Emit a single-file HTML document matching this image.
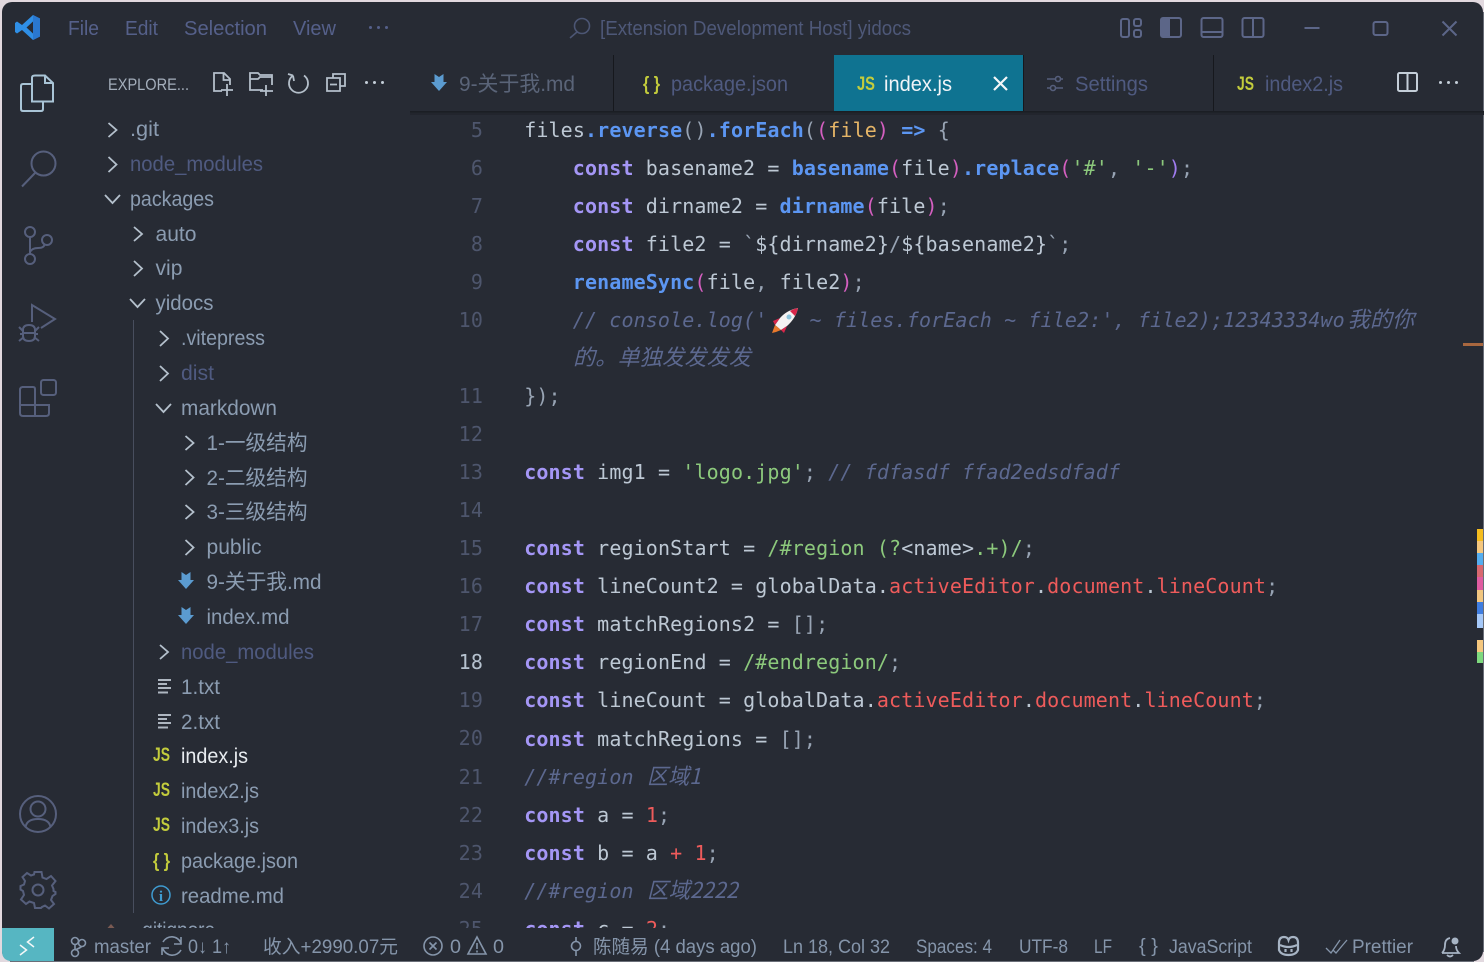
<!DOCTYPE html>
<html lang="zh">
<head>
<meta charset="utf-8">
<title>VS Code</title>
<style>
html,body{margin:0;padding:0;width:1484px;height:962px;overflow:hidden;background:#e2d9df}
svg{display:block;position:absolute;left:0;top:0}
text{white-space:pre}
.u{font-family:"Liberation Sans","Noto Sans CJK SC",sans-serif;font-size:21px;fill:#8b9cb1}
.d{fill:#4f5a80}
.s{font-size:19px;fill:#8595aa}
.m{font-size:20px;fill:#55608a}
.t{fill:#5a6478}
.js{font-family:"Liberation Sans",sans-serif;font-weight:bold;font-size:19px;fill:#c3cc3c}
.c{font-family:"DejaVu Sans Mono","Noto Sans CJK SC",monospace;font-size:20px;letter-spacing:.12px;fill:#bdc8d4}
.n{font-family:"DejaVu Sans Mono",monospace;font-size:20px;letter-spacing:.12px;fill:#4e566d;text-anchor:end}
.k{fill:#a496f5;font-weight:bold}
.f{fill:#5c96f2;font-weight:bold}
.q{fill:#8cc97c}
.r{fill:#ee5b5b}
.p{fill:#d45fc0}
.o{fill:#e5b567}
.g{fill:#98a4b4}
.v{fill:#a07cf0}
.cm{font-style:italic;fill:#5c688f}
.ic{fill:none;stroke:#565f7c;stroke-width:2}
.ia{fill:none;stroke:#b4c0cc;stroke-width:2}
.ch{fill:none;stroke:#b4c0cc;stroke-width:1.8}
.tx{fill:none;stroke:#aeb6c0;stroke-width:2}
</style>
</head>
<body>
<svg width="1484" height="962" viewBox="0 0 1484 962" xmlns="http://www.w3.org/2000/svg">
<defs>
<clipPath id="ed"><rect x="410" y="115" width="1074" height="813"/></clipPath>
<clipPath id="sb"><rect x="100" y="115" width="310" height="813"/></clipPath>
<g id="md"><path d="M-1.500 0L3 3L7.500 0V8H11L3 17L-5 8H-1.500Z" fill="#5b9bd0"/></g>
</defs>

<rect x="2" y="2" width="1481" height="959" rx="10" fill="#272b34"/>
<rect x="1483" y="12" width="1" height="940" fill="#6a6e78"/>
<rect x="10" y="961" width="1464" height="1" fill="#6a6e78"/>

<!-- logo -->
<path d="M33 15L40 18.500V36.500L33 40L22 30L17 33.500L15 32V23L17 21.500L22 25ZM33 21.500L26.500 27.500L33 33.500Z" fill="#2f8fe6" fill-rule="evenodd"/>
<path d="M33 15L40 18.500V36.500L33 40Z" fill="#2a78d0"/>

<!-- menu -->
<text class="u m" x="68" y="35" textLength="31" lengthAdjust="spacingAndGlyphs">File</text>
<text class="u m" x="125" y="35" textLength="33" lengthAdjust="spacingAndGlyphs">Edit</text>
<text class="u m" x="184" y="35" textLength="83" lengthAdjust="spacingAndGlyphs">Selection</text>
<text class="u m" x="293" y="35" textLength="43" lengthAdjust="spacingAndGlyphs">View</text>
<g fill="#55608a"><rect x="369" y="26" width="3" height="3" rx="1.500"/><rect x="377" y="26" width="3" height="3" rx="1.500"/><rect x="385" y="26" width="3" height="3" rx="1.500"/></g>

<!-- title -->
<circle cx="582" cy="26" r="7.500" class="ic" style="stroke:#4c5674;stroke-width:1.600"/>
<path d="M577 32L570 38" class="ic" style="stroke:#4c5674;stroke-width:1.600"/>
<text class="u m" style="fill:#4e5878" x="600" y="35" textLength="311" lengthAdjust="spacingAndGlyphs">[Extension Development Host] yidocs</text>

<!-- window controls -->
<g class="ic" style="stroke:#5c6688">
<rect x="1121" y="19" width="8" height="18" rx="2"/>
<rect x="1134" y="19" width="7" height="7" rx="2"/>
<rect x="1134" y="30" width="7" height="7" rx="2"/>
<rect x="1161" y="18" width="20" height="19" rx="2"/>
<rect x="1201.500" y="18" width="21" height="19" rx="2"/>
<path d="M1202 32H1222"/>
<rect x="1242.500" y="18" width="21" height="19" rx="2"/>
<path d="M1253 18V37"/>
<path d="M1304.500 28H1319.500"/>
<rect x="1373.500" y="22" width="14" height="13" rx="2"/>
<path d="M1442.500 21.500L1456.500 35.500M1456.500 21.500L1442.500 35.500"/>
</g>
<rect x="1161" y="18" width="9" height="19" fill="#5c6688"/>

<!-- activity bar -->
<g class="ia" style="stroke:#a9c4d6">
<path d="M35 75.500H45L53 83V101.500H32V77.500Q32 75.500 35 75.500ZM45 76V83H53"/>
<path d="M31.500 84H23Q21 84 21 86V109Q21 111 23 111H41Q43 111 43 109V102"/>
</g>
<g class="ic">
<circle cx="43.500" cy="163.500" r="12"/>
<path d="M35 173L22 186.500"/>
<circle cx="30" cy="232" r="5"/>
<circle cx="30" cy="259" r="5"/>
<circle cx="47" cy="240" r="5"/>
<path d="M30 237V254M30 252Q32 248 38 248Q44 248 44.500 244.500"/>
<path d="M32 322V305L55 319L41 328"/>
<path d="M23 330Q23 325 29 325Q35 325 35 330V336Q35 341 29 341Q23 341 23 336ZM23 333H35M19 327L23 331M39 327L35 331M19 341L24 337M39 341L34 337M20 334H23M35 334H38"/>
<rect x="41" y="380" width="15" height="15" rx="2.500"/>
<path d="M22 387H33Q35 387 35 389V415M20 405H49V413Q49 416 46 416H23Q20 416 20 413V390Q20 387 23 387M35 405V398"/>
<circle cx="38" cy="814" r="18"/>
<circle cx="38" cy="809" r="7.500"/>
<path d="M25.500 827Q27 819 38 819Q49 819 50.500 827"/>
<circle cx="38" cy="890" r="5.500"/>
<path d="M34.500 872H41.500L42.500 877.500L46.500 879L51 876L55.500 881L52 885.500L53.500 889V891L55.500 892V894L52.500 896L51 900L54 904L49 908.500L45 905.500L42 907L41 908H35L34 903L29.500 901.500L26 904L21 899.500L24 895L23 891L20.500 889.500V886L24 884.500L25 881L22.500 877L27 873L31 875.500L34 874.500Z"/>
</g>

<!-- explorer header -->
<text class="u" style="font-size:17px;fill:#a4aebb" x="108" y="90" textLength="81" lengthAdjust="spacingAndGlyphs">EXPLORE...</text>
<g class="tx" style="stroke:#b4bfca;stroke-width:1.800">
<path d="M222 91H214V73H224L230 79V85M223.500 73V80H230M227 84V96M221 90H233"/>
<path d="M263 90H250V73H258L260 75H272V85M250 79H258L260 77H272M266 85V96M260 91H273"/>
<path d="M293 75.500A9.500 9.500 0 1 0 304 75.500M293 75.500L294 81M293 75.500L288 74" style="stroke:#b4bfca"/>
<path d="M333 78V74H345V86H340M327 78H340V91H327ZM330 84.500H337"/>
</g>
<g fill="#c4ced8"><rect x="365" y="81" width="3" height="3" rx="1.500"/><rect x="373" y="81" width="3" height="3" rx="1.500"/><rect x="381" y="81" width="3" height="3" rx="1.500"/></g>

<!-- tabs -->
<rect x="834" y="55" width="189" height="56" fill="#0f7391"/>
<g fill="#16181d"><rect x="613" y="55" width="1" height="56"/><rect x="1023" y="55" width="1" height="56"/><rect x="1213" y="55" width="1" height="56"/></g>
<rect x="410" y="111" width="1074" height="1.500" fill="#1b1e24"/>
<rect x="410" y="112.500" width="1074" height="2.500" fill="#22252d"/>

<use href="#md" x="436" y="74"/>
<text class="u t" x="459" y="91" textLength="116" lengthAdjust="spacingAndGlyphs">9-关于我.md</text>
<text class="js" x="643" y="90" textLength="17" lengthAdjust="spacingAndGlyphs">{ }</text>
<text class="u t" style="fill:#4f5a80" x="671" y="91" textLength="117" lengthAdjust="spacingAndGlyphs">package.json</text>
<text class="js" x="857" y="90" textLength="18" lengthAdjust="spacingAndGlyphs">JS</text>
<text class="u" style="fill:#f0f4f8" x="884" y="91" textLength="68" lengthAdjust="spacingAndGlyphs">index.js</text>
<path d="M994 77L1007 90M1007 77L994 90" fill="none" stroke="#f4f6f8" stroke-width="2.200"/>
<g class="ic" style="stroke:#565f7c;stroke-width:1.600">
<path d="M1047 79H1055M1061 79H1063M1047 88H1050M1056 88H1063"/>
<circle cx="1058" cy="79" r="2.500"/><circle cx="1053" cy="88" r="2.500"/>
</g>
<text class="u t" style="fill:#4f5a80" x="1075" y="91" textLength="73" lengthAdjust="spacingAndGlyphs">Settings</text>
<text class="js" x="1237" y="90" textLength="17" lengthAdjust="spacingAndGlyphs">JS</text>
<text class="u t" style="fill:#4f5a80" x="1265" y="91" textLength="78" lengthAdjust="spacingAndGlyphs">index2.js</text>
<g class="ia" style="stroke:#c4ced8"><rect x="1398" y="73" width="19" height="18" rx="1.500"/><path d="M1407.500 73V91"/></g>
<g fill="#c4ced8"><rect x="1439" y="81" width="3" height="3" rx="1.500"/><rect x="1447" y="81" width="3" height="3" rx="1.500"/><rect x="1455" y="81" width="3" height="3" rx="1.500"/></g>

<!-- file tree -->
<g clip-path="url(#sb)">
<rect x="133" y="320" width="1" height="593" fill="#484e5e"/>
<g class="ch">
<path d="M108.500 123L116.500 130L108.500 137"/>
<path d="M108.500 157L116.500 164.500L108.500 172"/>
<path d="M105 195L112.500 203L120 195"/>
<path d="M134 227L142 234L134 241"/>
<path d="M134 261L142 268.500L134 276"/>
<path d="M130 299L137.500 307L145 299"/>
<path d="M160 331L168 338.500L160 346"/>
<path d="M160 366L168 373.500L160 381"/>
<path d="M156 404L163.500 412L171 404"/>
<path d="M185.500 436L193.500 443L185.500 450"/>
<path d="M185.500 470L193.500 477.500L185.500 485"/>
<path d="M185.500 505L193.500 512L185.500 519"/>
<path d="M185.500 540L193.500 547.500L185.500 555"/>
<path d="M160 645L168 652L160 659"/>
</g>
<text class="u" x="130" y="136" textLength="29" lengthAdjust="spacingAndGlyphs">.git</text>
<text class="u d" x="130" y="171" textLength="133" lengthAdjust="spacingAndGlyphs">node_modules</text>
<text class="u" x="130" y="206" textLength="84" lengthAdjust="spacingAndGlyphs">packages</text>
<text class="u" x="155.500" y="241" textLength="41" lengthAdjust="spacingAndGlyphs">auto</text>
<text class="u" x="155.500" y="275" textLength="27" lengthAdjust="spacingAndGlyphs">vip</text>
<text class="u" x="155.500" y="310" textLength="58" lengthAdjust="spacingAndGlyphs">yidocs</text>
<text class="u" x="181" y="345" textLength="84" lengthAdjust="spacingAndGlyphs">.vitepress</text>
<text class="u d" x="181" y="380" textLength="33" lengthAdjust="spacingAndGlyphs">dist</text>
<text class="u" x="181" y="415" textLength="96" lengthAdjust="spacingAndGlyphs">markdown</text>
<text class="u" x="206.500" y="450" textLength="101" lengthAdjust="spacingAndGlyphs">1-一级结构</text>
<text class="u" x="206.500" y="485" textLength="101" lengthAdjust="spacingAndGlyphs">2-二级结构</text>
<text class="u" x="206.500" y="519" textLength="101" lengthAdjust="spacingAndGlyphs">3-三级结构</text>
<text class="u" x="206.500" y="554" textLength="55" lengthAdjust="spacingAndGlyphs">public</text>
<use href="#md" x="183" y="572"/>
<text class="u" x="206.500" y="589" textLength="115" lengthAdjust="spacingAndGlyphs">9-关于我.md</text>
<use href="#md" x="183" y="607"/>
<text class="u" x="206.500" y="624" textLength="83" lengthAdjust="spacingAndGlyphs">index.md</text>
<text class="u d" x="181" y="659" textLength="133" lengthAdjust="spacingAndGlyphs">node_modules</text>
<path class="tx" d="M158 680H171M158 684H167M158 688H171M158 692.500H168"/>
<text class="u" x="181" y="694" textLength="39" lengthAdjust="spacingAndGlyphs">1.txt</text>
<path class="tx" d="M158 715H171M158 719H167M158 723H171M158 727.500H168"/>
<text class="u" x="181" y="729" textLength="39" lengthAdjust="spacingAndGlyphs">2.txt</text>
<text class="js" x="153" y="761" textLength="17" lengthAdjust="spacingAndGlyphs">JS</text>
<text class="u" style="fill:#e8ecf0" x="181" y="763" textLength="67" lengthAdjust="spacingAndGlyphs">index.js</text>
<text class="js" x="153" y="796" textLength="17" lengthAdjust="spacingAndGlyphs">JS</text>
<text class="u" x="181" y="798" textLength="78" lengthAdjust="spacingAndGlyphs">index2.js</text>
<text class="js" x="153" y="831" textLength="17" lengthAdjust="spacingAndGlyphs">JS</text>
<text class="u" x="181" y="833" textLength="78" lengthAdjust="spacingAndGlyphs">index3.js</text>
<text class="js" x="153" y="867" textLength="17" lengthAdjust="spacingAndGlyphs">{ }</text>
<text class="u" x="181" y="868" textLength="117" lengthAdjust="spacingAndGlyphs">package.json</text>
<circle cx="161" cy="895" r="9" fill="none" stroke="#3f9bd0" stroke-width="1.500"/>
<text x="161" y="901" text-anchor="middle" style="font-family:'Liberation Serif',serif;font-size:15px;font-weight:bold;fill:#3f9bd0">i</text>
<text class="u" x="181" y="903" textLength="103" lengthAdjust="spacingAndGlyphs">readme.md</text>
<path d="M104 932L111 924L118 932Z" fill="#7a5a52"/>
<text class="u" x="137" y="937" textLength="78" lengthAdjust="spacingAndGlyphs">.gitignore</text>
</g>

<!-- line numbers -->
<g clip-path="url(#ed)">
<text class="n" x="483" y="137">5</text>
<text class="n" x="483" y="175">6</text>
<text class="n" x="483" y="213">7</text>
<text class="n" x="483" y="251">8</text>
<text class="n" x="483" y="289">9</text>
<text class="n" x="483" y="327">10</text>
<text class="n" x="483" y="403">11</text>
<text class="n" x="483" y="441">12</text>
<text class="n" x="483" y="479">13</text>
<text class="n" x="483" y="517">14</text>
<text class="n" x="483" y="555">15</text>
<text class="n" x="483" y="593">16</text>
<text class="n" x="483" y="631">17</text>
<text class="n" style="fill:#b6c2cf" x="483" y="669">18</text>
<text class="n" x="483" y="707">19</text>
<text class="n" x="483" y="745">20</text>
<text class="n" x="483" y="784">21</text>
<text class="n" x="483" y="822">22</text>
<text class="n" x="483" y="860">23</text>
<text class="n" x="483" y="898">24</text>
<text class="n" x="483" y="936">25</text>

<!-- code -->
<text class="c" x="524.200" y="137">files<tspan class="f">.reverse</tspan><tspan class="g">()</tspan><tspan class="f">.forEach</tspan><tspan class="g">(</tspan><tspan class="p">(</tspan><tspan class="o">file</tspan><tspan class="p">)</tspan> <tspan class="f">=&gt;</tspan> <tspan class="g">{</tspan></text>
<text class="c" x="572.800" y="175"><tspan class="k">const</tspan> basename2 = <tspan class="f">basename</tspan><tspan class="p">(</tspan>file<tspan class="p">)</tspan><tspan class="f">.replace</tspan><tspan class="p">(</tspan><tspan class="q">'#'</tspan><tspan class="g">,</tspan> <tspan class="q">'-'</tspan><tspan class="v">)</tspan><tspan class="g">;</tspan></text>
<text class="c" x="572.800" y="213"><tspan class="k">const</tspan> dirname2 = <tspan class="f">dirname</tspan><tspan class="p">(</tspan>file<tspan class="p">)</tspan><tspan class="g">;</tspan></text>
<text class="c" x="572.800" y="251"><tspan class="k">const</tspan> file2 = <tspan class="g">`</tspan>${dirname2}<tspan class="g">/</tspan>${basename2}<tspan class="g">`;</tspan></text>
<text class="c" x="572.800" y="289"><tspan class="f">renameSync</tspan><tspan class="p">(</tspan>file<tspan class="g">,</tspan> file2<tspan class="p">)</tspan><tspan class="g">;</tspan></text>
<text class="c cm" x="572.800" y="327">// console.log('</text>
<g transform="translate(772 308)">
<path d="M26 0Q15 2 8 10L3 17L9 22L15 18Q24 10 26 0Z" fill="#f4f2f2"/>
<path d="M26 0Q21 1 18 3L23 8Q25 5 26 0Z" fill="#d8264a"/>
<path d="M8 10L1 13L3 17ZM15 18L12 25L9 22Z" fill="#d8264a"/>
<path d="M3 17L9 22L4 24L0 25Z" fill="#e8792c"/>
<circle cx="17" cy="9" r="2.500" fill="#8cc4dc"/>
</g>
<text class="c cm" x="809.500" y="327">~ files.forEach ~ file2:',</text>
<text class="c cm" x="1138" y="327">file2);12343334wo</text>
<text class="c cm" style="font-size:22px;font-family:'Noto Sans CJK SC',sans-serif" x="1347.500" y="327" textLength="67" lengthAdjust="spacingAndGlyphs">我的你</text>
<text class="c cm" style="font-size:22px;font-family:'Noto Sans CJK SC',sans-serif" x="573" y="365" textLength="178" lengthAdjust="spacingAndGlyphs">的。单独发发发发</text>
<text class="c" x="524.200" y="403"><tspan class="g">});</tspan></text>
<text class="c" x="524.200" y="479"><tspan class="k">const</tspan> img1 = <tspan class="q">'logo.jpg'</tspan><tspan class="g">;</tspan> <tspan class="cm">// fdfasdf ffad2edsdfadf</tspan></text>
<text class="c" x="524.200" y="555"><tspan class="k">const</tspan> regionStart = <tspan class="q">/#region</tspan> <tspan class="q">(?</tspan>&lt;name&gt;<tspan class="q">.+)/</tspan><tspan class="g">;</tspan></text>
<text class="c" x="524.200" y="593"><tspan class="k">const</tspan> lineCount2 = globalData.<tspan class="r">activeEditor</tspan>.<tspan class="r">document</tspan>.<tspan class="r">lineCount</tspan><tspan class="g">;</tspan></text>
<text class="c" x="524.200" y="631"><tspan class="k">const</tspan> matchRegions2 = <tspan class="g">[];</tspan></text>
<text class="c" x="524.200" y="669"><tspan class="k">const</tspan> regionEnd = <tspan class="q">/#endregion/</tspan><tspan class="g">;</tspan></text>
<text class="c" x="524.200" y="707"><tspan class="k">const</tspan> lineCount = globalData.<tspan class="r">activeEditor</tspan>.<tspan class="r">document</tspan>.<tspan class="r">lineCount</tspan><tspan class="g">;</tspan></text>
<text class="c" x="524.200" y="746"><tspan class="k">const</tspan> matchRegions = <tspan class="g">[];</tspan></text>
<text class="c cm" x="524.200" y="784">//#region</text>
<text class="c cm" style="font-size:22px;font-family:'Noto Sans CJK SC',sans-serif" x="647" y="784" textLength="54" lengthAdjust="spacingAndGlyphs">区域1</text>
<text class="c" x="524.200" y="822"><tspan class="k">const</tspan> a = <tspan class="r">1</tspan><tspan class="g">;</tspan></text>
<text class="c" x="524.200" y="860"><tspan class="k">const</tspan> b = a <tspan class="r">+</tspan> <tspan class="r">1</tspan><tspan class="g">;</tspan></text>
<text class="c cm" x="524.200" y="898">//#region</text>
<text class="c cm" style="font-size:22px;font-family:'Noto Sans CJK SC',sans-serif" x="647" y="898" textLength="91" lengthAdjust="spacingAndGlyphs">区域2222</text>
<text class="c" x="524.200" y="936"><tspan class="k">const</tspan> c = <tspan class="r">2</tspan><tspan class="g">;</tspan></text>
</g>

<!-- overview ruler -->
<rect x="1463" y="343" width="20" height="3" fill="#a8673f"/>
<rect x="1477" y="529" width="6" height="12" fill="#f5bd1f"/>
<rect x="1477" y="541" width="6" height="12" fill="#f5c77e"/>
<rect x="1477" y="553" width="6" height="12" fill="#55aef0"/>
<rect x="1477" y="565" width="6" height="12" fill="#d8686f"/>
<rect x="1477" y="577" width="6" height="13" fill="#e05ca0"/>
<rect x="1477" y="590" width="6" height="12" fill="#f2c680"/>
<rect x="1477" y="602" width="6" height="12" fill="#3f7de0"/>
<rect x="1477" y="614" width="6" height="14" fill="#a5c8f8"/>
<rect x="1477" y="640" width="6" height="12" fill="#f5c77e"/>
<rect x="1477" y="652" width="6" height="11" fill="#7ed97e"/>

<!-- status bar -->
<path d="M2 928H54V961H12Q2 961 2 951Z" fill="#56b6c2"/>
<path d="M20 945L26.500 950L20 955M34 937L27.500 942L34 947" fill="none" stroke="#f4f8f8" stroke-width="1.500"/>
<g class="tx" style="stroke:#8595aa;stroke-width:1.600">
<circle cx="75" cy="941" r="3.500"/><circle cx="75" cy="953" r="3.500"/><circle cx="82" cy="943" r="3.500"/>
<path d="M75 944.500V949.500M75 950Q80 948 81.500 946.500"/>
<path d="M163 942A10 10 0 0 1 181 943M181 950A10 10 0 0 1 163 949M181 937V944H174M162 955V948H169"/>
<circle cx="433" cy="946" r="9"/><path d="M429.500 942.500L436.500 949.500M436.500 942.500L429.500 949.500"/>
<path d="M477 937L486 954H468ZM477 943V949M477 950.500V952.500"/>
<circle cx="576" cy="946" r="4.500"/><path d="M576 937V941.500M576 950.500V956"/>
</g>
<text class="u s" x="94" y="953" textLength="57" lengthAdjust="spacingAndGlyphs">master</text>
<text class="u s" x="188" y="953" textLength="43" lengthAdjust="spacingAndGlyphs">0↓ 1↑</text>
<text class="u s" x="263" y="953" textLength="135" lengthAdjust="spacingAndGlyphs">收入+2990.07元</text>
<text class="u s" x="450" y="953" textLength="11" lengthAdjust="spacingAndGlyphs">0</text>
<text class="u s" x="493" y="953" textLength="11" lengthAdjust="spacingAndGlyphs">0</text>
<text class="u s" x="593" y="953" textLength="164" lengthAdjust="spacingAndGlyphs">陈随易 (4 days ago)</text>
<text class="u s" x="783" y="953" textLength="107" lengthAdjust="spacingAndGlyphs">Ln 18, Col 32</text>
<text class="u s" x="916" y="953" textLength="76" lengthAdjust="spacingAndGlyphs">Spaces: 4</text>
<text class="u s" x="1019" y="953" textLength="49" lengthAdjust="spacingAndGlyphs">UTF-8</text>
<text class="u s" x="1094" y="953" textLength="18" lengthAdjust="spacingAndGlyphs">LF</text>
<text class="u s" x="1139" y="952" textLength="19" lengthAdjust="spacingAndGlyphs">{ }</text>
<text class="u s" x="1169" y="953" textLength="83" lengthAdjust="spacingAndGlyphs">JavaScript</text>
<g fill="none" stroke="#a7b4c4" stroke-width="2.200">
<path d="M1279 950V943Q1279 937 1284 937Q1287.500 937 1288.500 940Q1289.500 937 1293 937Q1298 937 1298 943V950Q1296 955 1288.500 955Q1281 955 1279 950Z"/>
<path d="M1280 945Q1288.500 949 1297 945M1285.500 949V952M1291.500 949V952"/>
</g>
<path d="M1326 948L1331 953L1340 940M1333 950L1336 953L1347 940" fill="none" stroke="#8595aa" stroke-width="1.300"/>
<text class="u s" x="1352" y="953" textLength="61" lengthAdjust="spacingAndGlyphs">Prettier</text>
<path d="M1442 953Q1445 950 1445 945Q1445 939 1450 938M1442 953H1459Q1456 950 1456 946M1447 955Q1450 958 1453 955" fill="none" stroke="#a7b4c4" stroke-width="1.800"/>
<circle cx="1455" cy="941" r="3.500" fill="#a7b4c4"/>
</svg>
</body>
</html>
